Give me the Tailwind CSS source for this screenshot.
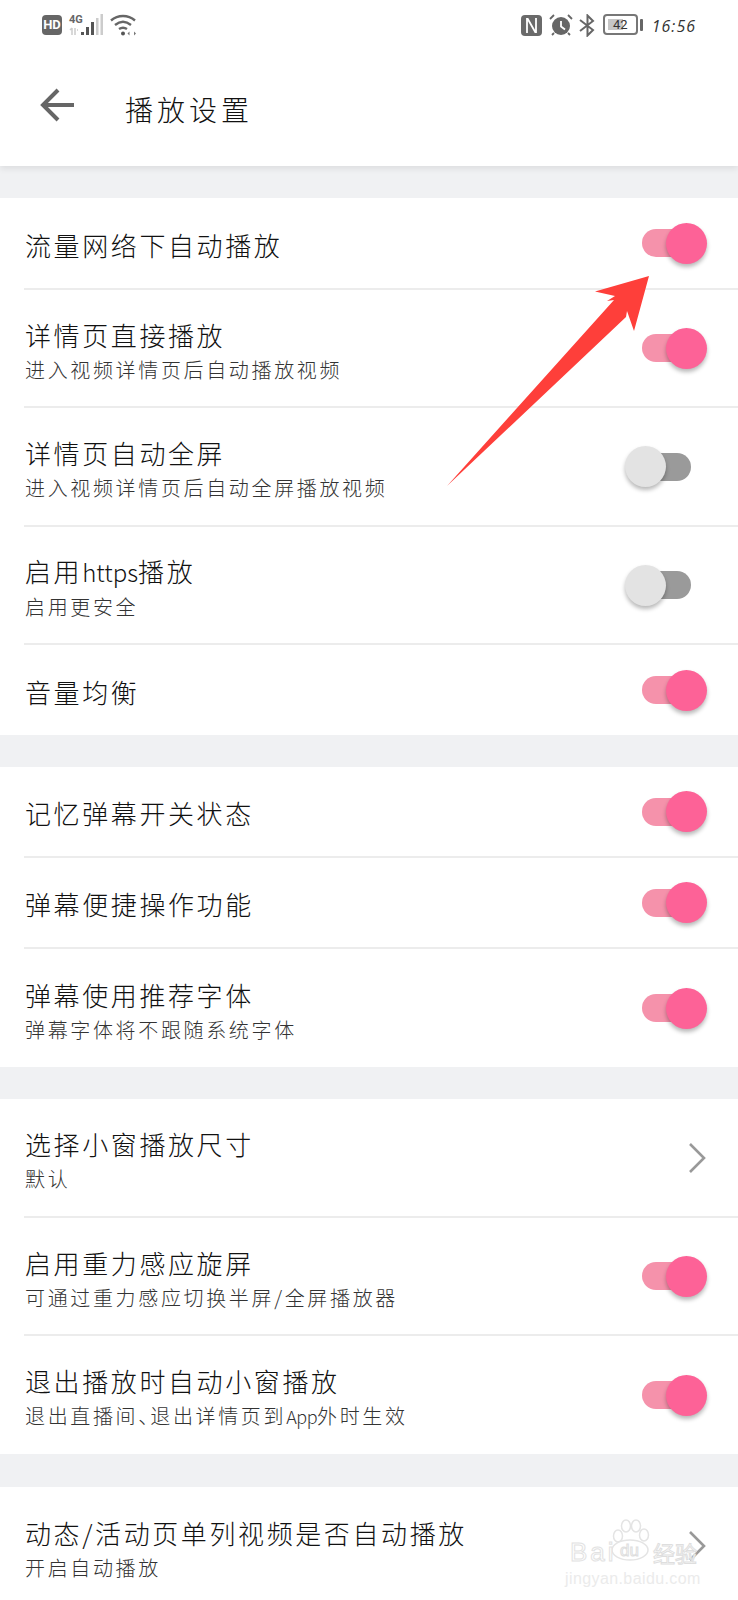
<!DOCTYPE html>
<html lang="zh-CN">
<head>
    <meta charset="UTF-8">
    <meta name="viewport" content="width=device-width, initial-scale=1.0">
    <title>播放设置</title>
    <script src="https://cdn.jsdelivr.net/npm/@tailwindcss/browser@4"></script>
</head>
<body class="font-['Noto_Sans_CJK_SC',sans-serif]">
<div class="relative w-[738px] h-[1600px] overflow-hidden bg-[#f0f1f3]">

    <!-- 顶部 -->
    <header class="relative z-10 h-[166px] bg-white shadow-[0_3px_6px_rgba(0,0,0,0.08)]">
        <!-- 状态栏 -->
        <div class="h-[52px] px-[42px] pt-[14px] flex justify-between items-start">
            <div class="flex items-start">
                <div class="w-[20px] h-[20px] mt-[1px] rounded-[4px] bg-[#666] text-white text-[13px] leading-[20px] font-bold text-center font-['Roboto',sans-serif]">HD</div>
                <div class="relative w-[38px] h-[22px] ml-[7px]">
                    <span class="absolute left-0 top-0 text-[11px] leading-[11px] font-bold text-[#666] font-['Roboto',sans-serif]">4G</span>
                    <svg class="absolute left-0 top-0" width="38" height="22" viewBox="0 0 38 22">
                        <path d="M3 21V14M1 16l2-2M6 14v7M8 16h1" stroke="#ccc" stroke-width="1.5" fill="none"/>
                        <rect x="12" y="18" width="3" height="3" fill="#555"/>
                        <rect x="17" y="13" width="3" height="8" fill="#555"/>
                        <rect x="22" y="8" width="3" height="13" fill="#555"/>
                        <rect x="27" y="4" width="2.5" height="17" fill="#ccc"/>
                        <rect x="31.5" y="0" width="2.5" height="21" fill="#ccc"/>
                    </svg>
                </div>
                <svg class="ml-[3px]" width="28" height="22" viewBox="0 0 28 22" fill="none" stroke="#666" stroke-width="2.4">
                    <path d="M1 6.5C8 .5 18 .5 25 6.5"/>
                    <path d="M5 11c5-4 11-4 16 0"/>
                    <path d="M9 15c3-2 5-2 8 0"/>
                    <circle cx="13" cy="19.5" r="2" fill="#555" stroke="none"/>
                    <path d="M19.5 17.5l-2 2 2 2zM24 17.5l2 2-2 2z" fill="#777" stroke="none"/>
                </svg>
            </div>
            <div class="flex items-start">
                <svg class="mt-[1px]" width="21" height="21" viewBox="0 0 21 21">
                    <rect x="0" y="0" width="21" height="21" rx="4" fill="#6a6a6a"/>
                    <path d="M6 3v15M15 3v15M6.500 3.500l8 14" stroke="#fff" stroke-width="1.800" fill="none"/>
                </svg>
                <svg class="ml-[7px]" width="24" height="22" viewBox="0 0 24 22">
                    <circle cx="12" cy="12" r="9" fill="#666"/>
                    <path d="M1 5l4-4M23 5l-4-4M5 19l-2 2M19 19l2 2" stroke="#666" stroke-width="1.8"/>
                    <path d="M12 7v5.500l4 3" stroke="#fff" stroke-width="1.8" fill="none"/>
                </svg>
                <svg class="ml-[6px]" width="16" height="23" viewBox="0 0 16 23" fill="none" stroke="#666" stroke-width="2">
                    <path d="M1 6l13 10-5.500 5.500V1.500L14 7 1 17"/>
                </svg>
                <div class="relative ml-[8px] w-[35px] h-[21px] rounded-[4px] border-2 border-[#777] bg-white">
                    <div class="absolute left-[3px] top-[3px] w-[15px] h-[11px] bg-[#c6c6c6]"></div>
                    <span class="absolute inset-0 text-center text-[13px] leading-[18px] text-[#333] font-['Roboto',sans-serif]">42</span>
                </div>
                <div class="w-[3px] h-[12px] ml-[2px] mt-[5px] rounded-[1px] bg-[#666]"></div>
                <span class="ml-[9px] -mt-[1px] text-[16px] leading-[26px] italic tracking-[1px] text-[#333] font-['Open_Sans',sans-serif]">16:56</span>
            </div>
        </div>
        <!-- 标题 -->
        <div class="flex items-center h-[112px] pl-[40px] pb-[6px]">
            <svg width="35" height="34" viewBox="0 0 35 34" fill="none" stroke="#666" stroke-width="4">
                <path d="M34 17H4M18 2L3 17l15 15"/>
            </svg>
            <h1 class="ml-[50px] mt-[7px] text-[28px] leading-[36px] tracking-[4px] font-light text-[#111]">播放设置</h1>
        </div>
    </header>

    <main class="pt-[32px]">
        <!-- 第一组 -->
        <section class="bg-white">
            <div class="flex items-center justify-between ml-6 pl-[1px] pr-[31px] h-[92px] border-b-2 border-[#ececec]">
                <p class="pt-[2px] text-[26px] leading-[33px] tracking-[2.600px] font-light text-[#111]">流量网络下自动播放</p>
                <div class="relative w-[82px] h-[41px] flex items-center">
                    <div class="ml-[17px] w-[49px] h-[28px] rounded-full bg-[#f592ab]"></div>
                    <div class="absolute right-0 top-0 w-[41px] h-[41px] rounded-full bg-[#fd6297] shadow-[0_3px_4px_rgba(0,0,0,0.28)]"></div>
                </div>
            </div>
            <div class="flex items-center justify-between ml-6 pl-[1px] pr-[31px] h-[118px] border-b-2 border-[#ececec]">
                <div class="pt-[7px]">
                    <p class="text-[26px] leading-[33px] tracking-[2.600px] font-light text-[#111]">详情页直接播放</p>
                    <p class="mt-[2px] text-[20px] leading-[33px] tracking-[2.650px] font-light text-[#333]">进入视频详情页后自动播放视频</p>
                </div>
                <div class="relative w-[82px] h-[41px] flex items-center">
                    <div class="ml-[17px] w-[49px] h-[28px] rounded-full bg-[#f592ab]"></div>
                    <div class="absolute right-0 top-0 w-[41px] h-[41px] rounded-full bg-[#fd6297] shadow-[0_3px_4px_rgba(0,0,0,0.28)]"></div>
                </div>
            </div>
            <div class="flex items-center justify-between ml-6 pl-[1px] pr-[31px] h-[119px] border-b-2 border-[#ececec]">
                <div class="pt-[7px]">
                    <p class="text-[26px] leading-[33px] tracking-[2.600px] font-light text-[#111]">详情页自动全屏</p>
                    <p class="mt-[2px] text-[20px] leading-[33px] tracking-[2.650px] font-light text-[#333]">进入视频详情页后自动全屏播放视频</p>
                </div>
                <div class="relative w-[82px] h-[41px] flex items-center">
                    <div class="ml-[17px] w-[49px] h-[28px] rounded-full bg-[#9a9a9a]"></div>
                    <div class="absolute left-0 top-0 w-[41px] h-[41px] rounded-full bg-[#e3e3e3] shadow-[0_3px_4px_rgba(0,0,0,0.28)]"></div>
                </div>
            </div>
            <div class="flex items-center justify-between ml-6 pl-[1px] pr-[31px] h-[118px] border-b-2 border-[#ececec]">
                <div class="pt-[7px]">
                    <p class="text-[26px] leading-[33px] tracking-[2.600px] font-light text-[#111]">启用<span class="text-[24px] tracking-[0px]">https</span>播放</p>
                    <p class="mt-[2px] text-[20px] leading-[33px] tracking-[2.650px] font-light text-[#333]">启用更安全</p>
                </div>
                <div class="relative w-[82px] h-[41px] flex items-center">
                    <div class="ml-[17px] w-[49px] h-[28px] rounded-full bg-[#9a9a9a]"></div>
                    <div class="absolute left-0 top-0 w-[41px] h-[41px] rounded-full bg-[#e3e3e3] shadow-[0_3px_4px_rgba(0,0,0,0.28)]"></div>
                </div>
            </div>
            <div class="flex items-center justify-between ml-6 pl-[1px] pr-[31px] h-[90px]">
                <p class="pt-[2px] text-[26px] leading-[33px] tracking-[2.600px] font-light text-[#111]">音量均衡</p>
                <div class="relative w-[82px] h-[41px] flex items-center">
                    <div class="ml-[17px] w-[49px] h-[28px] rounded-full bg-[#f592ab]"></div>
                    <div class="absolute right-0 top-0 w-[41px] h-[41px] rounded-full bg-[#fd6297] shadow-[0_3px_4px_rgba(0,0,0,0.28)]"></div>
                </div>
            </div>
        </section>

        <!-- 第二组 -->
        <section class="bg-white mt-[32px]">
            <div class="flex items-center justify-between ml-6 pl-[1px] pr-[31px] h-[91px] border-b-2 border-[#ececec]">
                <p class="pt-[2px] text-[26px] leading-[33px] tracking-[2.600px] font-light text-[#111]">记忆弹幕开关状态</p>
                <div class="relative w-[82px] h-[41px] flex items-center">
                    <div class="ml-[17px] w-[49px] h-[28px] rounded-full bg-[#f592ab]"></div>
                    <div class="absolute right-0 top-0 w-[41px] h-[41px] rounded-full bg-[#fd6297] shadow-[0_3px_4px_rgba(0,0,0,0.28)]"></div>
                </div>
            </div>
            <div class="flex items-center justify-between ml-6 pl-[1px] pr-[31px] h-[91px] border-b-2 border-[#ececec]">
                <p class="pt-[2px] text-[26px] leading-[33px] tracking-[2.600px] font-light text-[#111]">弹幕便捷操作功能</p>
                <div class="relative w-[82px] h-[41px] flex items-center">
                    <div class="ml-[17px] w-[49px] h-[28px] rounded-full bg-[#f592ab]"></div>
                    <div class="absolute right-0 top-0 w-[41px] h-[41px] rounded-full bg-[#fd6297] shadow-[0_3px_4px_rgba(0,0,0,0.28)]"></div>
                </div>
            </div>
            <div class="flex items-center justify-between ml-6 pl-[1px] pr-[31px] h-[118px]">
                <div class="pt-[7px]">
                    <p class="text-[26px] leading-[33px] tracking-[2.600px] font-light text-[#111]">弹幕使用推荐字体</p>
                    <p class="mt-[2px] text-[20px] leading-[33px] tracking-[2.650px] font-light text-[#333]">弹幕字体将不跟随系统字体</p>
                </div>
                <div class="relative w-[82px] h-[41px] flex items-center">
                    <div class="ml-[17px] w-[49px] h-[28px] rounded-full bg-[#f592ab]"></div>
                    <div class="absolute right-0 top-0 w-[41px] h-[41px] rounded-full bg-[#fd6297] shadow-[0_3px_4px_rgba(0,0,0,0.28)]"></div>
                </div>
            </div>
        </section>

        <!-- 第三组 -->
        <section class="bg-white mt-[32px]">
            <div class="flex items-center justify-between ml-6 pl-[1px] pr-[31px] h-[119px] border-b-2 border-[#ececec]">
                <div class="pt-[7px]">
                    <p class="text-[26px] leading-[33px] tracking-[2.600px] font-light text-[#111]">选择小窗播放尺寸</p>
                    <p class="mt-[2px] text-[20px] leading-[33px] tracking-[2.650px] font-light text-[#333]">默认</p>
                </div>
                <svg class="mr-[1px]" width="18" height="32" viewBox="0 0 18 32" fill="none" stroke="#999" stroke-width="2.600">
                    <path d="M2 2l14 14L2 30"/>
                </svg>
            </div>
            <div class="flex items-center justify-between ml-6 pl-[1px] pr-[31px] h-[118px] border-b-2 border-[#ececec]">
                <div class="pt-[7px]">
                    <p class="text-[26px] leading-[33px] tracking-[2.600px] font-light text-[#111]">启用重力感应旋屏</p>
                    <p class="mt-[2px] text-[20px] leading-[33px] tracking-[2.650px] font-light text-[#333]">可通过重力感应切换半屏/全屏播放器</p>
                </div>
                <div class="relative w-[82px] h-[41px] flex items-center">
                    <div class="ml-[17px] w-[49px] h-[28px] rounded-full bg-[#f592ab]"></div>
                    <div class="absolute right-0 top-0 w-[41px] h-[41px] rounded-full bg-[#fd6297] shadow-[0_3px_4px_rgba(0,0,0,0.28)]"></div>
                </div>
            </div>
            <div class="flex items-center justify-between ml-6 pl-[1px] pr-[31px] h-[118px]">
                <div class="pt-[7px]">
                    <p class="text-[26px] leading-[33px] tracking-[2.600px] font-light text-[#111]">退出播放时自动小窗播放</p>
                    <p class="mt-[2px] text-[20px] leading-[33px] tracking-[2.650px] font-light text-[#333]">退出直播间<span class="tracking-[-8px]">、</span>退出详情页到<span class="text-[18px] tracking-[-0.500px]">App</span>外时生效</p>
                </div>
                <div class="relative w-[82px] h-[41px] flex items-center">
                    <div class="ml-[17px] w-[49px] h-[28px] rounded-full bg-[#f592ab]"></div>
                    <div class="absolute right-0 top-0 w-[41px] h-[41px] rounded-full bg-[#fd6297] shadow-[0_3px_4px_rgba(0,0,0,0.28)]"></div>
                </div>
            </div>
        </section>

        <!-- 第四组 -->
        <section class="bg-white mt-[33px]">
            <div class="flex items-center justify-between ml-6 pl-[1px] pr-[31px] h-[118px]">
                <div class="pt-[7px]">
                    <p class="text-[26px] leading-[33px] tracking-[2.600px] font-light text-[#111]">动态/活动页单列视频是否自动播放</p>
                    <p class="mt-[2px] text-[20px] leading-[33px] tracking-[2.650px] font-light text-[#333]">开启自动播放</p>
                </div>
                <svg class="mr-[1px]" width="18" height="32" viewBox="0 0 18 32" fill="none" stroke="#999" stroke-width="2.600">
                    <path d="M2 2l14 14L2 30"/>
                </svg>
            </div>
        </section>
    </main>

    <!-- 红色箭头标注 -->
    <svg class="absolute left-0 top-0 z-20 pointer-events-none" width="738" height="600" viewBox="0 0 738 600">
        <polygon fill="#fe3f3a" points="649,276 595,291.500 615,296 607,301 614,300 447,486 626,317 627,311 634,331"/>
    </svg>

    <!-- 水印 -->
    <div class="absolute left-[565px] top-[1518px] z-20 w-[136px] h-[70px] pointer-events-none">
        <svg class="absolute left-[41px] top-0" width="48" height="44" viewBox="0 0 48 44" fill="#fff" stroke="#e4e4e4" stroke-width="1.500">
            <ellipse cx="12" cy="18" rx="4.500" ry="6"/>
            <ellipse cx="20" cy="8" rx="4.500" ry="6"/>
            <ellipse cx="30" cy="8" rx="4.500" ry="6"/>
            <ellipse cx="38" cy="17" rx="4.500" ry="6"/>
            <ellipse cx="24" cy="32" rx="18" ry="10"/>
        </svg>
        <span class="absolute left-[55px] top-[22px] text-[17px] leading-[22px] text-white [-webkit-text-stroke:1px_#dedede] font-['Liberation_Sans',sans-serif]">du</span>
        <span class="absolute left-[5px] top-[20px] text-[26px] leading-[28px] tracking-[3px] text-white [-webkit-text-stroke:1px_#e2e2e2] font-['Liberation_Sans',sans-serif]">Bai</span>
        <span class="absolute left-[88px] top-[22px] text-[22px] leading-[24px] text-white [-webkit-text-stroke:1px_#dedede]">经验</span>
        <span class="absolute left-0 top-[52px] text-[16px] leading-[18px] tracking-[0.400px] text-[#ebebeb] font-['Liberation_Sans',sans-serif]">jingyan.baidu.com</span>
    </div>
</div>
</body>
</html>
